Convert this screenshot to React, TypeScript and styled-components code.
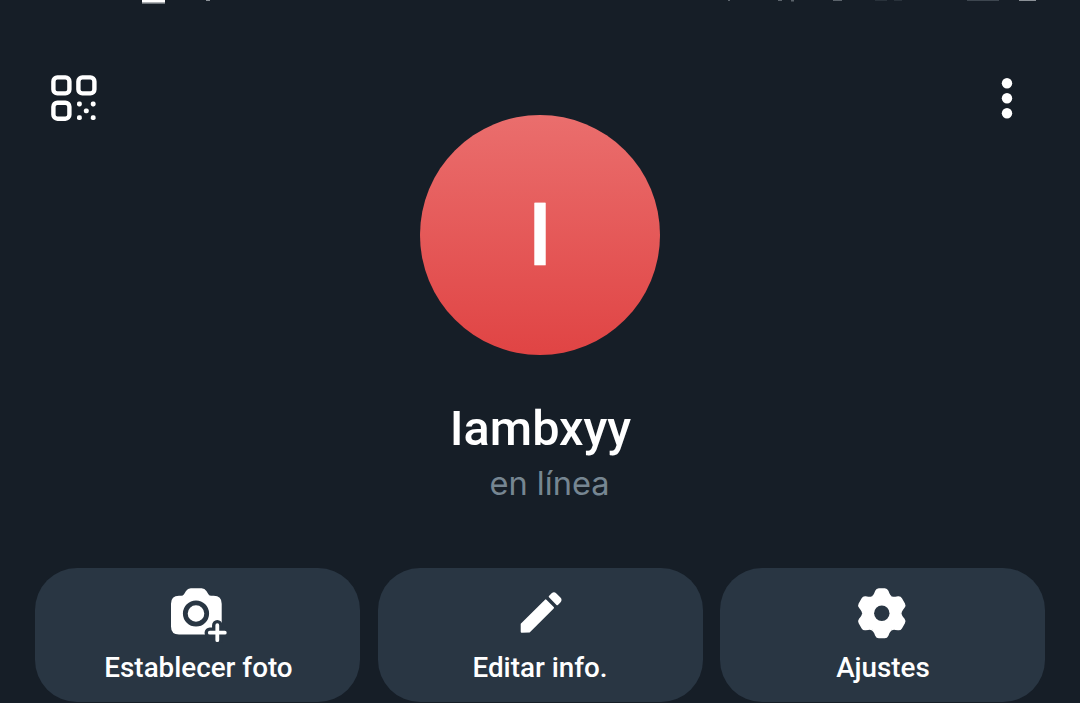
import { FunctionComponent, ReactNode } from 'react';
import styled, { createGlobalStyle } from 'styled-components';

const GlobalStyle = createGlobalStyle`
  * {
    box-sizing: border-box;
  }

  body {
    margin: 0;
    background: #161e27;
    overflow: hidden;
  }

  button {
    padding: 0;
    border: 0;
    background: none;
    font: inherit;
    color: inherit;
  }
`;

const Screen = styled.main`
  height: 703px;
  display: flex;
  flex-direction: column;
  background: #161e27;
  color: #fff;
  font-family: Roboto, 'Liberation Sans', sans-serif;
`;

const StatusBar = styled.svg`
  display: block;
  flex: none;
`;

const Header = styled.header`
  display: flex;
  flex: none;
  justify-content: space-between;
  align-items: flex-start;
  height: 81px;
  padding: 38px 45px 0 48px;

  svg {
    display: block;
  }
`;

const Profile = styled.section`
  display: flex;
  flex: none;
  flex-direction: column;
  align-items: center;
  height: 453px;
`;

const Avatar = styled.div`
  display: flex;
  align-items: center;
  justify-content: center;
  width: 240px;
  height: 240px;
  padding-top: 2px;
  border-radius: 50%;
  background: linear-gradient(#ea6e6d, #e04444);
  font-size: 86.5px;
  font-weight: 500;
  line-height: 1;
  -webkit-text-stroke: 0.5px #fff;
`;

const Name = styled.h1`
  margin: 44px 0 0 1px;
  font-size: 48.6px;
  font-weight: 500;
  line-height: 60px;
`;

const Status = styled.p`
  margin: 7px 0 0 19px;
  color: #768692;
  font-family: Inter, 'Open Sans', sans-serif;
  font-size: 32.6px;
  line-height: 34px;
`;

const Actions = styled.nav`
  display: grid;
  grid-template-columns: repeat(3, 1fr);
  gap: 17.5px;
  padding: 0 35px;
`;

const ActionButton = styled.button`
  display: flex;
  flex-direction: column;
  align-items: center;
  height: 134px;
  padding-top: 15px;
  border-radius: 42px;
  background: #293643;

  svg {
    display: block;
  }
`;

const ActionLabel = styled.span<{ shift?: number }>`
  margin: 9px 0 0 ${({ shift }): number => shift || 0}px;
  font-size: 27.8px;
  font-weight: 500;
  line-height: 32px;
`;

const QrIcon: FunctionComponent = () => (
  <svg width="52" height="52" viewBox="48 72 52 52">
    <g fill="none" stroke="#fff" strokeWidth="4.4">
      <rect x="53.4" y="77.4" width="16" height="16" rx="4" />
      <rect x="78.4" y="77.4" width="16" height="16" rx="4" />
      <rect x="53.4" y="102.7" width="16" height="16" rx="4" />
    </g>
    <g fill="#fff">
      <rect x="77" y="101.6" width="4.8" height="4.8" rx="1.8" />
      <rect x="90.8" y="101.6" width="4.8" height="4.8" rx="1.8" />
      <rect x="83.9" y="108.4" width="4.8" height="4.8" rx="1.8" />
      <rect x="77" y="115.3" width="4.8" height="4.8" rx="1.8" />
      <rect x="90.8" y="115.3" width="4.8" height="4.8" rx="1.8" />
    </g>
  </svg>
);

const MoreIcon: FunctionComponent = () => (
  <svg width="56" height="52" viewBox="979 72 56 52" fill="#fff">
    <circle cx="1007" cy="83.2" r="5.2" />
    <circle cx="1007" cy="98.2" r="5.2" />
    <circle cx="1007" cy="113.2" r="5.2" />
  </svg>
);

const CameraIcon: FunctionComponent = () => (
  <svg width="61" height="60" viewBox="167 583 61 60">
    <path
      fill="#fff"
      d="M179 595.7h2.2q1.8 0 2.8-1.5l2-3.2q1.7-2.7 4.8-2.7h10.8q3.1 0 4.8 2.7l2 3.2q1 1.5 2.8 1.5h2.5q8 0 8 8V627q0 7.500-8 7.500H179q-8 0-8-8v-22.800q0-8 8-8z"
    />
    <circle cx="196" cy="613.5" r="10.7" fill="none" stroke="#293643" strokeWidth="4.8" />
    <path
      d="M217.3 625.2v15M209.8 632.7h15"
      fill="none"
      stroke="#293643"
      strokeWidth="10.5"
      strokeLinecap="round"
    />
    <path
      d="M217.3 625.2v15M209.8 632.7h15"
      fill="none"
      stroke="#fff"
      strokeWidth="3.8"
      strokeLinecap="round"
    />
  </svg>
);

const PencilIcon: FunctionComponent = () => (
  <svg width="60" height="60" viewBox="510.3 583 60 60">
    <g fill="#fff" stroke="#fff" strokeWidth="2" strokeLinejoin="round">
      <path d="M522 624.2L546 600.4L553.3 607.8L529.5 631.6L522 631.7z" />
      <path d="M550 596.6L552.6 594Q554.3 592.7 556 594.2L560 598.2Q561.5 599.8 560.2 601.5L557.5 604.2z" />
    </g>
  </svg>
);

const GearIcon: FunctionComponent = () => (
  <svg width="60" height="60" viewBox="-28.8 -30.3 60 60">
    <g fill="#fff">
      {[0, 60, 120, 180, 240, 300].map(angle => (
        <path
          key={angle}
          transform={`rotate(${angle})`}
          d="M0 0L-9.9 -17.1Q-8.4 -18 -7.6 -20L-6.6 -22.5Q-5.5 -25 -3 -25H3Q5.5 -25 6.6 -22.5L7.6 -20Q8.4 -18 9.9 -17.1z"
        />
      ))}
      <circle r="19" />
    </g>
    <circle r="7.7" fill="#293643" />
  </svg>
);

interface IAction {
  label: string;
  icon: ReactNode;
  shift?: number;
}

const actions: IAction[] = [
  { label: 'Establecer foto', icon: <CameraIcon />, shift: 2 },
  { label: 'Editar info.', icon: <PencilIcon />, shift: 0 },
  { label: 'Ajustes', icon: <GearIcon />, shift: 1 },
];

const App: FunctionComponent = () => (
  <>
    <GlobalStyle />
    <Screen>
      {/* only the lower edge of the system icons is visible */}
      <StatusBar width="1080" height="34" viewBox="0 0 1080 34">
        <path fill="#fff" d="M142 0h23v2.7h-23z" />
        <path fill="#8b9197" d="M142 2.7h23v1h-23zM206 0h4v1h-4zM1019 0h17v1h-17z" />
        <path fill="#5b636b" d="M728 0h2v1h-2zM778 0h4v1h-4zM791 0h3v1.5h-3zM833 0h9v1h-9z" />
        <path fill="#3d464f" d="M967 0h32v1h-32z" />
        <path fill="#29323b" d="M875 0h12v1h-12zM894 0h8v1h-8z" />
      </StatusBar>
      <Header>
        <button aria-label="Código QR">
          <QrIcon />
        </button>
        <button aria-label="Más opciones">
          <MoreIcon />
        </button>
      </Header>
      <Profile>
        <Avatar>I</Avatar>
        <Name>Iambxyy</Name>
        <Status>en línea</Status>
      </Profile>
      <Actions>
        {actions.map(({ label, icon, shift }) => (
          <ActionButton key={label}>
            {icon}
            <ActionLabel shift={shift}>{label}</ActionLabel>
          </ActionButton>
        ))}
      </Actions>
    </Screen>
  </>
);

export default App;
